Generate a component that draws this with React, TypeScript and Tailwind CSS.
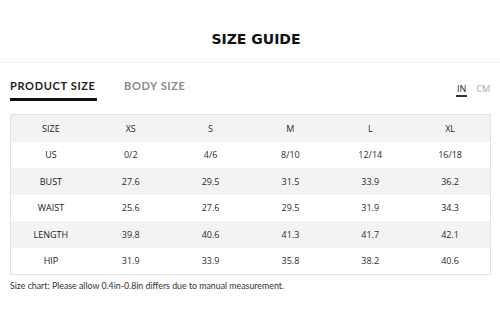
import React from "react";

const headers = ["SIZE", "XS", "S", "M", "L", "XL"];
const rows: string[][] = [
  ["US", "0/2", "4/6", "8/10", "12/14", "16/18"],
  ["BUST", "27.6", "29.5", "31.5", "33.9", "36.2"],
  ["WAIST", "25.6", "27.6", "29.5", "31.9", "34.3"],
  ["LENGTH", "39.8", "40.6", "41.3", "41.7", "42.1"],
  ["HIP", "31.9", "33.9", "35.8", "38.2", "40.6"],
];

export default function App() {
  const all = [headers, ...rows];
  return (
    <div className="w-[500px] h-[333px] bg-white overflow-hidden" style={{ fontFamily: '"Open Sans", sans-serif' }}>
      <div className="h-[62px] flex items-center justify-center pt-[16px] pl-[12px]">
        <h1 className="text-[14px] leading-none font-bold text-[#111]" style={{ fontFamily: '"DejaVu Sans", sans-serif' }}>
          SIZE GUIDE
        </h1>
      </div>
      <div className="h-px bg-[#f2f2f2]" />
      <div className="flex items-start justify-between px-[10px] h-[51px] pt-[17px]">
        <div className="flex items-start gap-[27px]">
          <div className="flex flex-col">
            <span className="text-[11px] leading-[11px] font-bold tracking-[0.06em] text-[#222]" style={{ fontFamily: 'Lato, sans-serif' }}>PRODUCT SIZE</span>
            <span className="mt-[7px] h-[3px] w-[87px] bg-[#111]" />
          </div>
          <span className="text-[11px] leading-[11px] font-bold tracking-[0.06em] text-[#8a8a8a]" style={{ fontFamily: 'Lato, sans-serif' }}>BODY SIZE</span>
        </div>
        <div className="flex items-start gap-[9px] pt-[4px]">
          <div className="flex flex-col items-center">
            <span className="text-[9px] leading-[9px] font-medium text-[#222]">IN</span>
            <span className="mt-[2px] h-[2px] w-[11px] bg-[#333]" />
          </div>
          <span className="text-[9px] leading-[9px] text-[#aaa]">CM</span>
        </div>
      </div>
      <div className="mx-[10px] w-[481px] border border-[#e3e3e3]">
        {all.map((r, i) => (
          <div
            key={i}
            className={`grid grid-cols-6 h-[26.5px] items-center ${i % 2 === 0 ? "bg-[#f3f3f3]" : "bg-white"}`}
          >
            {r.map((c, j) => (
              <div key={j} className={`text-center text-[9px] leading-none ${j === 0 ? "text-[#1a1a1a] font-medium" : "text-[#2a2a2a]"}`}>
                {c}
              </div>
            ))}
          </div>
        ))}
      </div>
      <p className="px-[10px] mt-[7px] text-[8.8px] leading-none text-[#333]" style={{ fontFamily: 'Lato, sans-serif' }}>
        Size chart: Please allow 0.4in-0.8in differs due to manual measurement.
      </p>
    </div>
  );
}
